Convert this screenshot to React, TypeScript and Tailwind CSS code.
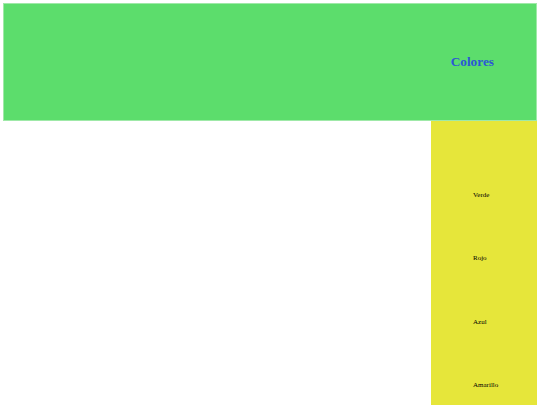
import React from 'react';

const items = ['Verde', 'Rojo', 'Azul', 'Amarillo'];

const App: React.FC = () => {
  return (
    <div className="px-[3px] pt-[3px] font-['Liberation_Serif',serif]">
      <div className="flex h-[118px] items-center justify-end border border-[#9fe9a8] bg-[#5cdd6c] pr-[42px]">
        <h1 className="text-[13.3px] font-bold leading-none text-[#2b56d6]">Colores</h1>
      </div>
      <div className="flex">
        <div className="flex-1 bg-white" />
        <div className="flex h-[284px] w-[106px] flex-col gap-[56.5px] bg-[#e6e63a] pl-[42px] pt-[70.5px]">
          {items.map((item) => (
            <span key={item} className="text-[7px] leading-[7px] text-black">
              {item}
            </span>
          ))}
        </div>
      </div>
    </div>
  );
};

export default App;
